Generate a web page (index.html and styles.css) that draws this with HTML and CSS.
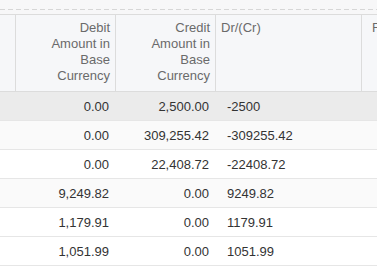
FILE: index.html
```html
<!DOCTYPE html>
<html>
<head>
<meta charset="utf-8">
<link rel="stylesheet" href="styles.css">
</head>
<body>
<div class="page">
  <div class="toolbar"><div class="dash"></div></div>
  <div class="grid">
    <div class="row head">
      <div class="cell c0"></div>
      <div class="cell c1 num">Debit<br>Amount in<br>Base<br>Currency</div>
      <div class="cell c2 num">Credit<br>Amount in<br>Base<br>Currency</div>
      <div class="cell c3">Dr/(Cr)</div>
      <div class="cell c4">F</div>
    </div>
    <div class="row sel">
      <div class="cell c0"></div>
      <div class="cell c1 num">0.00</div>
      <div class="cell c2 num">2,500.00</div>
      <div class="cell c3">-2500</div>
      <div class="cell c4"></div>
    </div>
    <div class="row alt">
      <div class="cell c0"></div>
      <div class="cell c1 num">0.00</div>
      <div class="cell c2 num">309,255.42</div>
      <div class="cell c3">-309255.42</div>
      <div class="cell c4"></div>
    </div>
    <div class="row">
      <div class="cell c0"></div>
      <div class="cell c1 num">0.00</div>
      <div class="cell c2 num">22,408.72</div>
      <div class="cell c3">-22408.72</div>
      <div class="cell c4"></div>
    </div>
    <div class="row alt">
      <div class="cell c0"></div>
      <div class="cell c1 num">9,249.82</div>
      <div class="cell c2 num">0.00</div>
      <div class="cell c3">9249.82</div>
      <div class="cell c4"></div>
    </div>
    <div class="row">
      <div class="cell c0"></div>
      <div class="cell c1 num">1,179.91</div>
      <div class="cell c2 num">0.00</div>
      <div class="cell c3">1179.91</div>
      <div class="cell c4"></div>
    </div>
    <div class="row">
      <div class="cell c0"></div>
      <div class="cell c1 num">1,051.99</div>
      <div class="cell c2 num">0.00</div>
      <div class="cell c3">1051.99</div>
      <div class="cell c4"></div>
    </div>
  </div>
</div>
</body>
</html>
```
FILE: styles.css
```css
html, body {
  margin: 0;
  padding: 0;
  background: #ffffff;
  overflow: hidden;
}
.page {
  width: 377px;
  height: 273px;
  overflow: hidden;
  font-family: "Liberation Sans", Arial, sans-serif;
  font-size: 13px;
}
.toolbar {
  height: 14px;
  background: #f7f7f8;
  padding-top: 9px;
  box-sizing: border-box;
}
.dash {
  height: 1px;
  background: repeating-linear-gradient(to right, #d6d6d6 0 5px, transparent 5px 8px);
}
.grid {
  border-top: 1px solid #dcdcdc;
}
.row {
  display: flex;
  height: 29px;
  box-sizing: border-box;
  border-bottom: 1px solid #e6e6e6;
  color: #333333;
  background: #ffffff;
}
.row.sel { background: #ebebeb; }
.row.alt { background: #fafafa; }
.row.head {
  height: 77px;
  background: #f6f7f9;
  color: #6a6a6a;
  border-bottom: 1px solid #dcdcdc;
  line-height: 16px;
}
.cell {
  box-sizing: border-box;
  flex: none;
  display: flex;
  align-items: center;
  padding: 0 9px;
  white-space: nowrap;
}
.head .cell {
  display: block;
  padding: 5px 5px 0 5px;
  border-right: 1px solid #dcdcdc;
}
.c0 { width: 16px; }
.c1 { width: 100px; }
.c2 { width: 100px; }
.c3 { width: 146px; }
.c4 { width: 40px; }
.head .c4 { border-right: none; padding-left: 10px; }
.num { justify-content: flex-end; text-align: right; }
```
